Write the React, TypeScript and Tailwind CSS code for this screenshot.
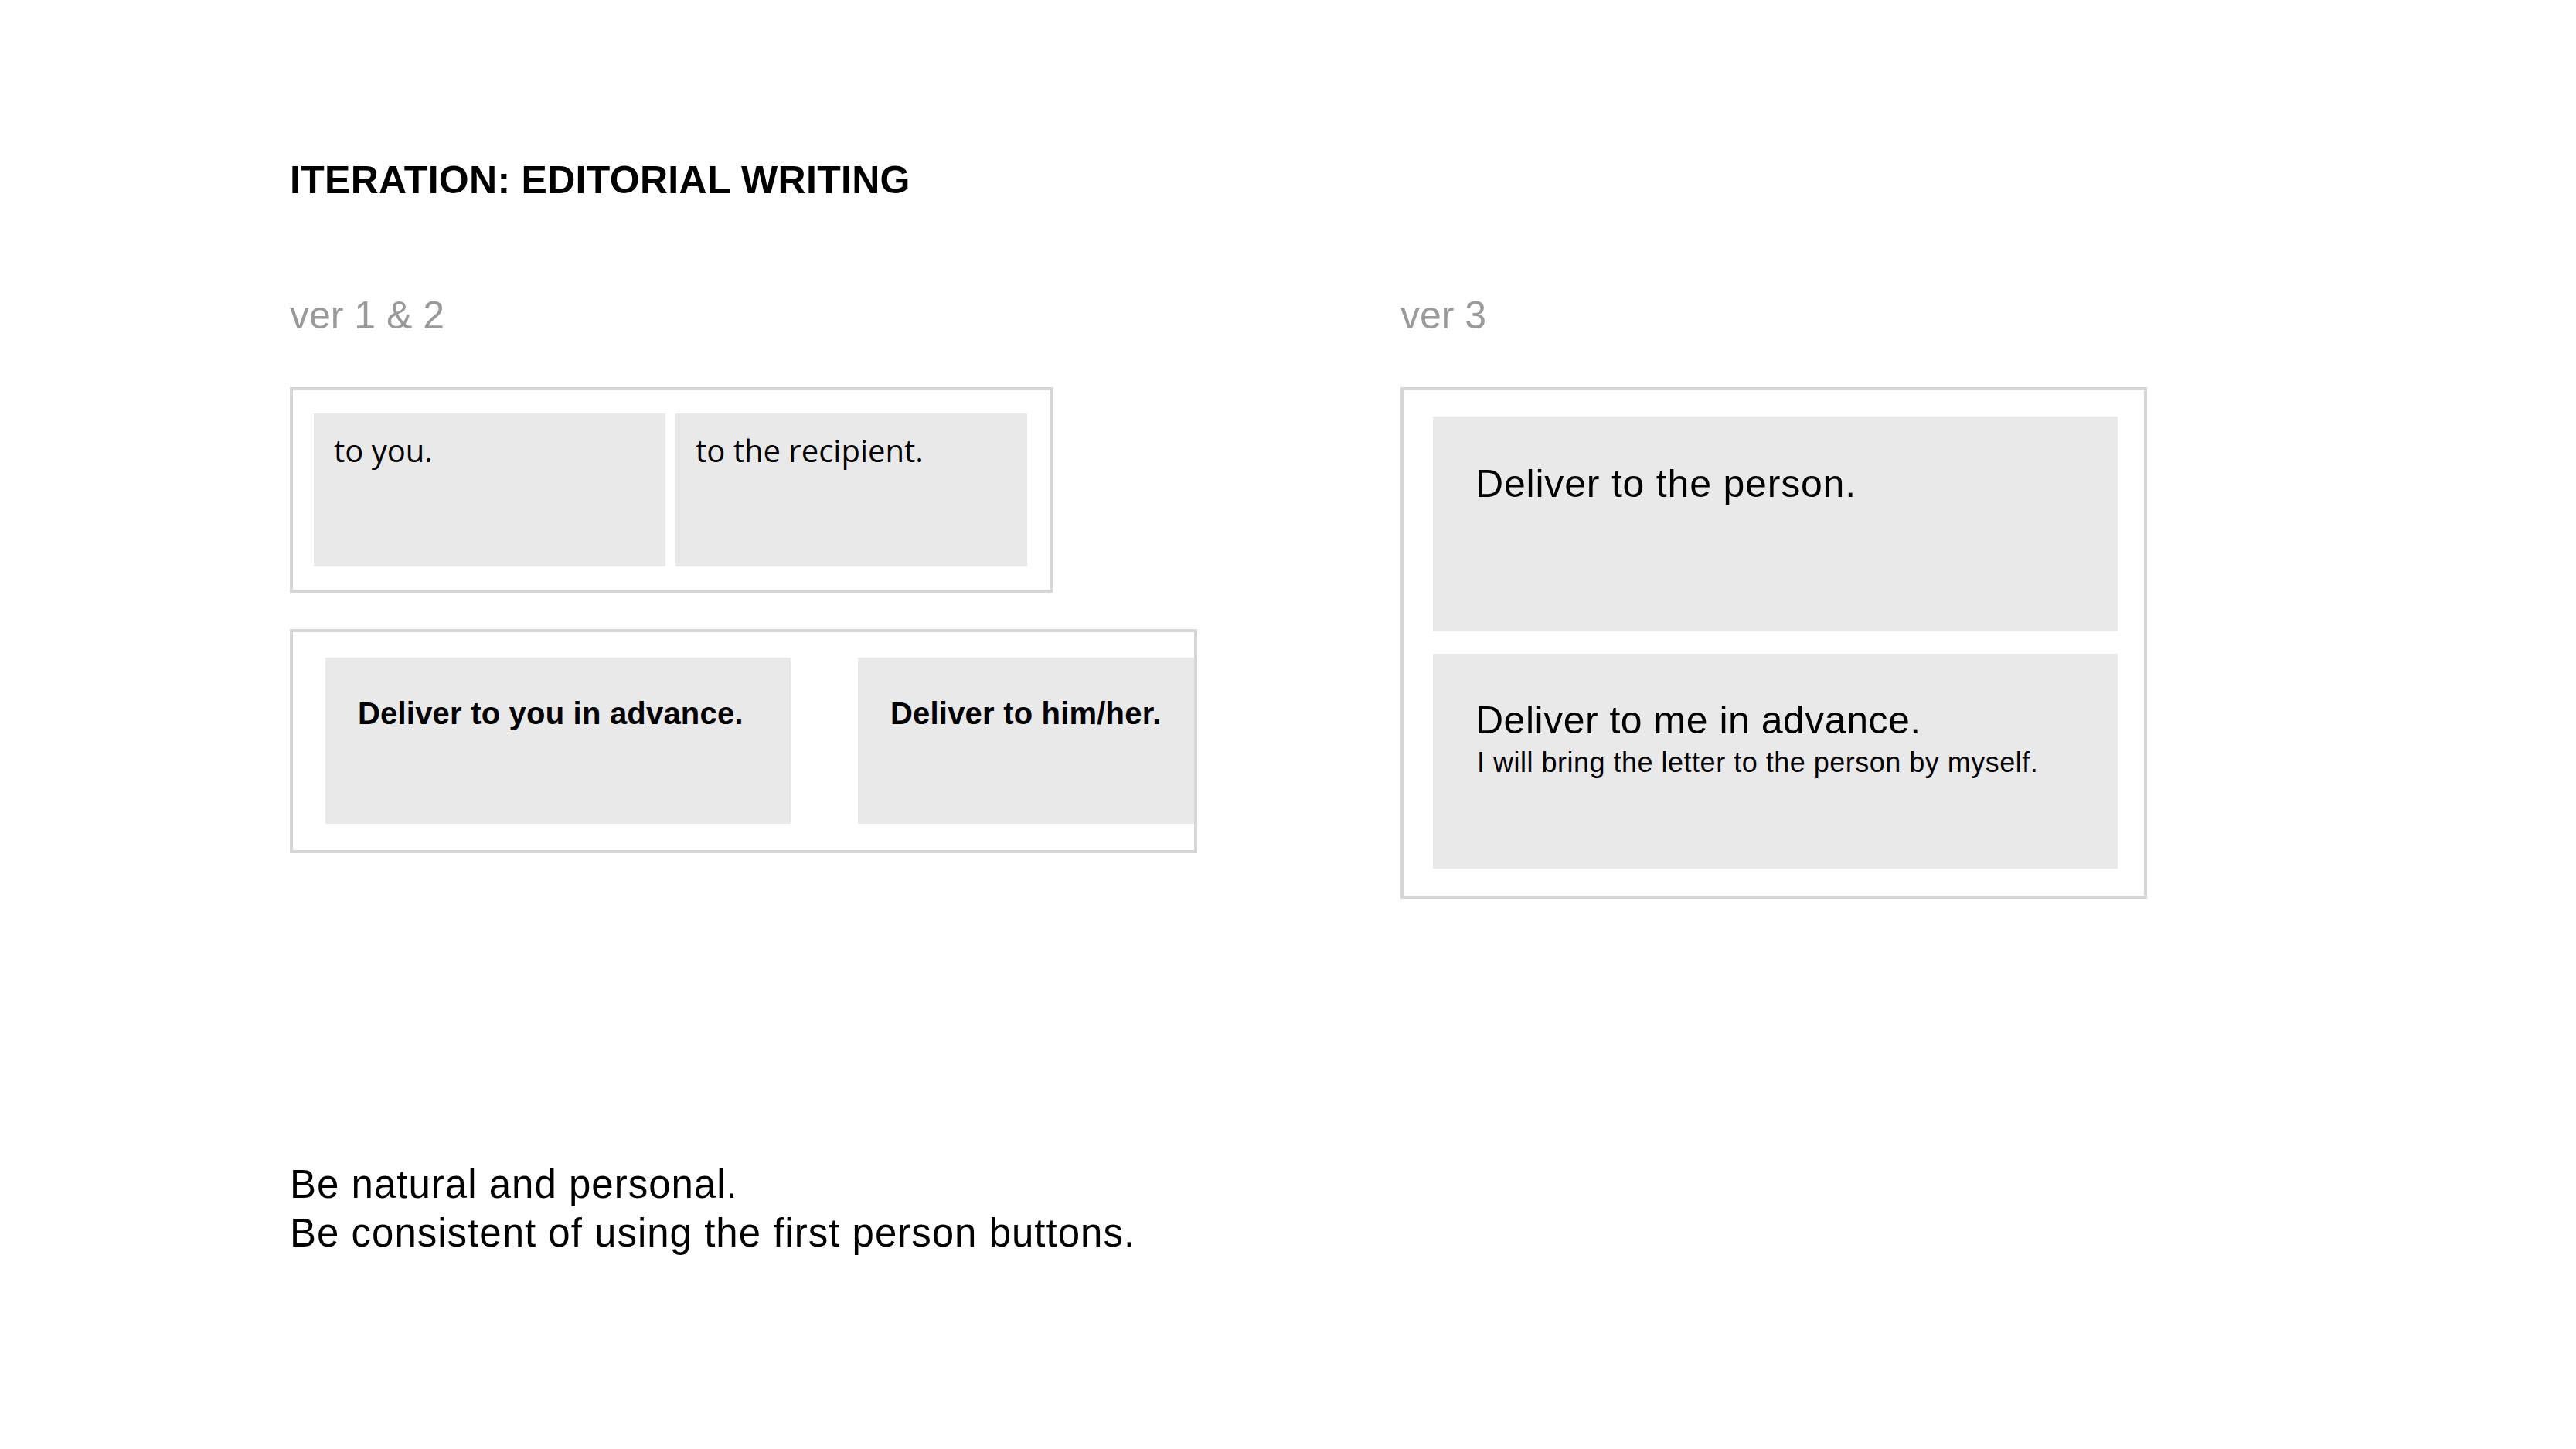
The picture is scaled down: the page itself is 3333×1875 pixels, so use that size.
export default function App() {
  return (
    <div className="w-[3333px] h-[1875px] bg-white pl-[375px] pt-[203px] text-black font-['Liberation_Sans',Arial,sans-serif]">
      <h1 className="text-[50px] leading-[60px] font-bold tracking-[0.3px]">ITERATION: EDITORIAL WRITING</h1>

      <div className="flex mt-[115px]">
        {/* ver 1 & 2 */}
        <div className="w-[1437px] shrink-0 flex flex-col">
          <div className="text-[50px] leading-[60px] text-[#9a9a9a]">ver 1 &amp; 2</div>

          <div className="mt-[63px] w-[988px] border-4 border-[#d6d6d6] pl-[27px] pt-[30px] pb-[30px] flex gap-[13px]">
            <div className="w-[455px] h-[198px] bg-[#e9e9e9] pl-[26px] pt-[24px] font-['Open_Sans',sans-serif] text-[40px] leading-[48px]">
              to you.
            </div>
            <div className="w-[455px] h-[198px] bg-[#e9e9e9] pl-[26px] pt-[24px] font-['Open_Sans',sans-serif] text-[40px] leading-[48px]">
              to the recipient.
            </div>
          </div>

          <div className="mt-[47px] w-[1174px] border-4 border-[#d6d6d6] pl-[42px] pt-[33px] pb-[34px] flex gap-[87px] overflow-hidden">
            <div className="w-[602px] h-[215px] shrink-0 bg-[#e9e9e9] pl-[42px] pt-[48px] text-[40px] leading-[48px] font-bold tracking-[0.2px]">
              Deliver to you in advance.
            </div>
            <div className="w-[602px] h-[215px] shrink-0 bg-[#e9e9e9] pl-[42px] pt-[48px] text-[40px] leading-[48px] font-bold tracking-[0.2px]">
              Deliver to him/her.
            </div>
          </div>
        </div>

        {/* ver 3 */}
        <div className="flex flex-col">
          <div className="text-[50px] leading-[60px] text-[#9a9a9a]">ver 3</div>

          <div className="mt-[63px] w-[966px] border-4 border-[#d6d6d6] pl-[38px] pr-[34px] pt-[34px] pb-[35px] flex flex-col gap-[29px]">
            <div className="h-[278px] bg-[#e9e9e9] pl-[55px] pt-[57px] text-[50px] leading-[60px] tracking-[0.8px]">
              Deliver to the person.
            </div>
            <div className="h-[278px] bg-[#e9e9e9] pl-[55px] pt-[56px]">
              <div className="text-[50px] leading-[60px] tracking-[0.5px]">Deliver to me in advance.</div>
              <div className="mt-[5px] text-[36px] leading-[40px] pl-[2px] tracking-[0.5px]">
                I will bring the letter to the person by myself.
              </div>
            </div>
          </div>
        </div>
      </div>

      <div className="mt-[338px] text-[51px] leading-[63px] tracking-[1px]">
        <p>Be natural and personal.</p>
        <p>Be consistent of using the first person buttons.</p>
      </div>
    </div>
  );
}
